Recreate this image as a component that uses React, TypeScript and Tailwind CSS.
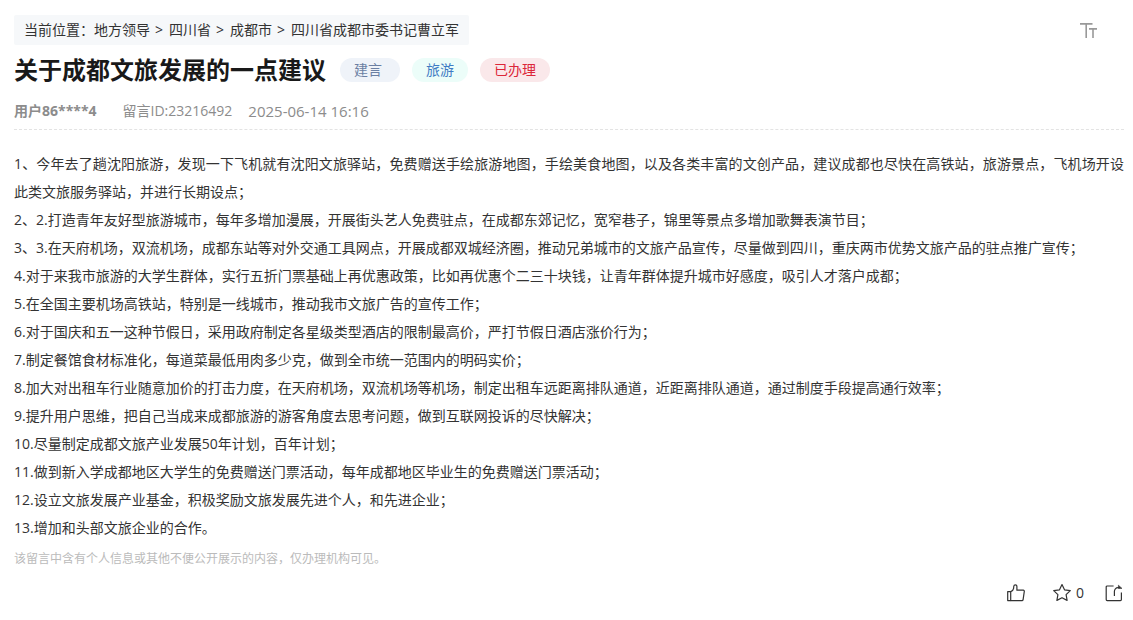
import { clsx } from 'clsx';

type Crumb = { name: string; path: string };
type Tag = { label: string; className: string };

const crumbs: Crumb[] = [
  { name: '地方领导', path: '#local' },
  { name: '四川省', path: '#sichuan' },
  { name: '成都市', path: '#chengdu' },
  { name: '四川省成都市委书记曹立军', path: '#leader' },
];

const tags: Tag[] = [
  { label: '建言', className: 'bg-[#eff3f9] pl-3.5 pr-[18px] text-[#6b7fa3]' },
  { label: '旅游', className: 'bg-[#ecfdf9] px-3.5 text-[#3f7bc4]' },
  { label: '已办理', className: 'bg-[#fae8ea] px-3.5 text-[#dc2639]' },
];

const paragraphs = [
  '1、今年去了趟沈阳旅游，发现一下飞机就有沈阳文旅驿站，免费赠送手绘旅游地图，手绘美食地图，以及各类丰富的文创产品，建议成都也尽快在高铁站，旅游景点，飞机场开设此类文旅服务驿站，并进行长期设点；',
  '2、2.打造青年友好型旅游城市，每年多增加漫展，开展街头艺人免费驻点，在成都东郊记忆，宽窄巷子，锦里等景点多增加歌舞表演节目；',
  '3、3.在天府机场，双流机场，成都东站等对外交通工具网点，开展成都双城经济圈，推动兄弟城市的文旅产品宣传，尽量做到四川，重庆两市优势文旅产品的驻点推广宣传；',
  '4.对于来我市旅游的大学生群体，实行五折门票基础上再优惠政策，比如再优惠个二三十块钱，让青年群体提升城市好感度，吸引人才落户成都；',
  '5.在全国主要机场高铁站，特别是一线城市，推动我市文旅广告的宣传工作；',
  '6.对于国庆和五一这种节假日，采用政府制定各星级类型酒店的限制最高价，严打节假日酒店涨价行为；',
  '7.制定餐馆食材标准化，每道菜最低用肉多少克，做到全市统一范围内的明码实价；',
  '8.加大对出租车行业随意加价的打击力度，在天府机场，双流机场等机场，制定出租车远距离排队通道，近距离排队通道，通过制度手段提高通行效率；',
  '9.提升用户思维，把自己当成来成都旅游的游客角度去思考问题，做到互联网投诉的尽快解决；',
  '10.尽量制定成都文旅产业发展50年计划，百年计划；',
  '11.做到新入学成都地区大学生的免费赠送门票活动，每年成都地区毕业生的免费赠送门票活动；',
  '12.设立文旅发展产业基金，积极奖励文旅发展先进个人，和先进企业；',
  '13.增加和头部文旅企业的合作。',
];

function FontSizeIcon() {
  return (
    <svg width="18" height="16" viewBox="0 0 18 16" fill="#999" aria-hidden="true">
      <path d="M0 0h12.5v1.8H7V15H5.4V1.8H0z" />
      <path d="M9 5h8v1.8h-3.2V15h-1.6V6.8H9z" />
    </svg>
  );
}

function LikeIcon() {
  return (
    <svg width="20" height="20" viewBox="0 0 20 20" fill="none" stroke="#333" strokeWidth="1.2" strokeLinejoin="round" aria-hidden="true">
      <path d="M1.7 8.6h3v9h-3z" />
      <path d="M4.7 8.6c1.6-.5 2.6-1.6 2.9-3.3l.2-2.1c.1-.9.7-1.4 1.5-1.4 1 0 1.6.7 1.6 1.7v3.7h6.4c.7 0 1.1.5 1 1.2l-1.2 8.2c-.1.6-.5 1-1.1 1H4.7" />
    </svg>
  );
}

function StarIcon() {
  return (
    <svg width="20" height="20" viewBox="0 0 20 20" fill="none" stroke="#333" strokeWidth="1.2" strokeLinejoin="round" aria-hidden="true">
      <path d="M10 1.6l2.5 5.2 5.8.8-4.2 4 1 5.8-5.1-2.7-5.1 2.7 1-5.8-4.2-4 5.8-.8z" />
    </svg>
  );
}

function ShareIcon() {
  return (
    <svg width="20" height="20" viewBox="0 0 20 20" fill="none" stroke="#333" strokeWidth="1.2" strokeLinejoin="round" aria-hidden="true">
      <path d="M9.6 3H3.2c-.6 0-1 .4-1 1v12.6c0 .6.4 1 1 1h13.2c.6 0 1-.4 1-1V9.4" />
      <path d="M10.4 13V8.6c0-2.2 1.4-3.9 3.6-3.9h1.6" />
      <path d="M14.4 2.2l3.6 3.2h-3.6z" fill="#333" strokeWidth="0.6" />
    </svg>
  );
}

export default function App() {
  return (
    <main className="bg-white pt-[15px] pr-[9px] pb-4 pl-3.5 font-['Open_Sans','Noto_Sans_CJK_SC',sans-serif] text-sm text-[#333]">
      <header className="border-b border-dashed border-[#e3e3e3] pb-2">
        <div className="flex items-center justify-between pr-[26px]">
          <nav className="flex h-[30px] items-center rounded-xs bg-[#f6f8fa] px-2.5" aria-label="当前位置">
            <span>当前位置：</span>
            {crumbs.map((item, index) => (
              <span key={item.path} className="flex">
                {index > 0 && <span className="mr-1.5 ml-[5px]">&gt;</span>}
                <a href={item.path} className="hover:underline">
                  {item.name}
                </a>
              </span>
            ))}
          </nav>
          <button type="button" aria-label="字号" className="pt-0.5">
            <FontSizeIcon />
          </button>
        </div>

        <div className="mt-[7px] flex items-center gap-3.5">
          <h1 className="text-2xl leading-9 font-bold text-[#191919]">关于成都文旅发展的一点建议</h1>
          <div className="flex gap-3">
            {tags.map((tag) => (
              <span key={tag.label} className={clsx('h-6 rounded-full leading-6', tag.className)}>
                {tag.label}
              </span>
            ))}
          </div>
        </div>

        <div className="mt-[13px] flex leading-5 text-[#8c8c8c]">
          <span className="mr-[26px] font-bold">用户86****4</span>
          <span className="mr-4">留言ID:23216492</span>
          <time dateTime="2025-06-14T16:16" className="text-[15px]">
            2025-06-14 16:16
          </time>
        </div>
      </header>

      <article className="mt-5 text-justify leading-7">
        {paragraphs.map((text) => (
          <p key={text}>{text}</p>
        ))}
      </article>
      <p className="mt-[7px] text-xs leading-5 text-[#bbb]">该留言中含有个人信息或其他不便公开展示的内容，仅办理机构可见。</p>

      <footer className="mt-3.5 flex items-center justify-end">
        <button type="button" aria-label="点赞" className="mr-[26px]">
          <LikeIcon />
        </button>
        <button type="button" aria-label="收藏" className="mr-5 flex items-center gap-1">
          <StarIcon />
          <span>0</span>
        </button>
        <button type="button" aria-label="分享">
          <ShareIcon />
        </button>
      </footer>
    </main>
  );
}
